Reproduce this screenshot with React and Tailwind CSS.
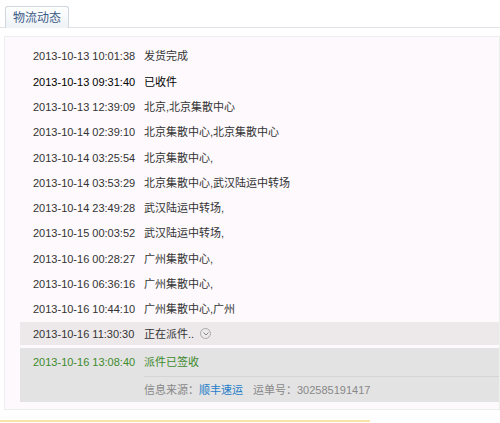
const rows = [
  ["2013-10-13 10:01:38", "发货完成"],
  ["2013-10-13 09:31:40", "已收件", true],
  ["2013-10-13 12:39:09", "北京,北京集散中心"],
  ["2013-10-14 02:39:10", "北京集散中心,北京集散中心"],
  ["2013-10-14 03:25:54", "北京集散中心,"],
  ["2013-10-14 03:53:29", "北京集散中心,武汉陆运中转场"],
  ["2013-10-14 23:49:28", "武汉陆运中转场,"],
  ["2013-10-15 00:03:52", "武汉陆运中转场,"],
  ["2013-10-16 00:28:27", "广州集散中心,"],
  ["2013-10-16 06:36:16", "广州集散中心,"],
  ["2013-10-16 10:44:10", "广州集散中心,广州"],
];

export default function App() {
  return (
    <div className="w-[500px] h-[423px] bg-white text-[11px] text-[#333] relative" style={{ fontFamily: '"Liberation Sans", "Noto Sans CJK SC", sans-serif' }}>
      <div className="pt-[6px] pl-[5px] border-b border-[#dfe3e8] h-[28px] flex">
        <div className="w-[64px] h-[22px] border border-b-0 border-[#cfd6de] rounded-t-[3px] bg-gradient-to-b from-white to-[#eef2f6] text-[#3b5a85] text-[12px] flex items-center justify-center">物流动态</div>
      </div>
      <div className="mt-[8px] ml-[4px] h-[374px] border border-[#eee] bg-[#fdf9fc] pt-[7px] pl-[15px]">
        {rows.map(([t, s, b]) => (
          <div key={t} className={`h-[25.3px] flex items-center pl-[13px] ${b ? "text-black" : ""}`}>
            <span className="w-[111px]">{t}</span>
            <span>{s}</span>
          </div>
        ))}
        <div className="h-[23px] flex items-center pl-[13px] bg-[#ede9eb]">
          <span className="w-[111px]">2013-10-16 11:30:30</span>
          <span>正在派件..</span>
          <span className="ml-[6px] w-[11px] h-[11px] rounded-full border border-[#aaa] flex items-center justify-center">
            <svg width="6" height="4" viewBox="0 0 6 4"><path d="M0.5 0.5 L3 3 L5.5 0.5" fill="none" stroke="#888" strokeWidth="1" /></svg>
          </span>
        </div>
        <div className="mt-[3px] bg-[#e3e3e3] pl-[13px]">
          <div className="h-[28px] flex items-center text-[#3e8a2c]">
            <span className="w-[111px]">2013-10-16 13:08:40</span>
            <span>派件已签收</span>
          </div>
          <div className="ml-[111px] border-t border-[#d5d5d5] h-[26px] flex items-center text-[#888]">
            信息来源：<span className="text-[#1e7cc8]">顺丰速运</span>
            <span className="ml-[10px]">运单号：302585191417</span>
          </div>
        </div>
      </div>
      <div className="absolute left-0 top-[420px] w-[370px] h-[2px] bg-[#f8e3a8]" />
    </div>
  );
}
